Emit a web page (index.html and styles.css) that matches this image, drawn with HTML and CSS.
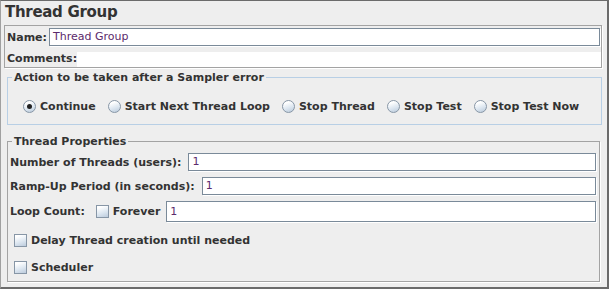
FILE: index.html
```html
<!DOCTYPE html>
<html>
<head>
<meta charset="utf-8">
<link rel="stylesheet" href="styles.css">
</head>
<body>
<div class="frame">
  <h1 class="title">Thread Group</h1>
  <div class="name-panel">
    <div class="name-row">
      <span class="lbl name-lbl">Name:</span>
      <div class="field">Thread Group</div>
    </div>
    <div class="comments-row">
      <span class="lbl">Comments:</span>
      <div class="area"></div>
    </div>
  </div>
  <fieldset class="group action">
    <legend>Action to be taken after a Sampler error</legend>
    <div class="radios">
      <label class="opt"><span class="radio on"></span>Continue</label>
      <label class="opt"><span class="radio"></span>Start Next Thread Loop</label>
      <label class="opt"><span class="radio"></span>Stop Thread</label>
      <label class="opt"><span class="radio"></span>Stop Test</label>
      <label class="opt"><span class="radio"></span>Stop Test Now</label>
    </div>
  </fieldset>
  <fieldset class="group props">
    <legend>Thread Properties</legend>
    <div class="prow">
      <span class="lbl">Number of Threads (users):</span>
      <div class="field">1</div>
    </div>
    <div class="prow">
      <span class="lbl">Ramp-Up Period (in seconds):</span>
      <div class="field">1</div>
    </div>
    <div class="prow loop">
      <span class="lbl loop-lbl">Loop Count:</span>
      <label class="opt forever"><span class="check"></span>Forever</label>
      <div class="field">1</div>
    </div>
    <label class="opt crow delay"><span class="check"></span>Delay Thread creation until needed</label>
    <label class="opt crow sched"><span class="check"></span>Scheduler</label>
  </fieldset>
</div>
</body>
</html>
```
FILE: styles.css
```css
* { box-sizing: border-box; }
html, body { margin: 0; padding: 0; }
body {
  width: 609px;
  height: 289px;
  overflow: hidden;
  background: #eeeeee;
  font-family: "DejaVu Sans", sans-serif;
  font-size: 11px;
  color: #333333;
}
.frame {
  width: 609px;
  height: 289px;
  display: flex;
  flex-direction: column;
  background: #eeeeee;
  border-top: 1px solid #6b6b6b;
  border-left: 1px solid #a0a0a0;
  border-right: 2px solid #6b6b6b;
  border-bottom: 2px solid #6b6b6b;
}
.title {
  margin: 0;
  padding: 2px 0 0 4px;
  height: 20px;
  font-size: 15px;
  line-height: 18px;
  font-weight: bold;
  letter-spacing: -0.3px;
  color: #333333;
}
.lbl { font-weight: bold; line-height: 13px; white-space: nowrap; }
.name-panel {
  margin: 4px 5px 0 3px;
  border: 1px solid #a3a3a3;
  box-shadow: 1px 1px 0 #ffffff;
  padding: 2px 0 0 2px;
  display: flex;
  flex-direction: column;
  gap: 6px;
}
.name-row {
  display: flex;
  align-items: center;
  height: 18px;
  padding-right: 1px;
}
.name-lbl { width: 42px; }
.field {
  flex: 1;
  height: 18px;
  background: #ffffff;
  border: 1px solid #7a8a99;
  box-shadow: 1px 1px 0 #ffffff;
  padding: 0 3px;
  line-height: 16px;
  color: #5c2a6c;
  white-space: nowrap;
}
.comments-row { display: flex; height: 15px; }
.area { flex: 1; background: #ffffff; }

.group {
  margin: 0;
  padding: 0;
  min-width: 0;
  border: 1px solid #a3a3a3;
}
.group legend {
  margin-left: 4px;
  padding: 0 2px;
  font-weight: bold;
  line-height: 13px;
}
.action {
  margin: 3px 5px 0 6px;
  border-color: #b8cfe5;
  padding: 14px 0 9px 0;
}
.radios {
  display: flex;
  align-items: center;
  gap: 12px;
  height: 17px;
  padding-left: 15px;
}
.opt {
  display: flex;
  align-items: center;
  font-weight: bold;
  line-height: 13px;
  white-space: nowrap;
}
.radio {
  width: 13px;
  height: 13px;
  margin-right: 4px;
  border-radius: 50%;
  border: 1px solid #8796a6;
  background: linear-gradient(160deg, #ffffff 20%, #dce6f0 60%, #b9c9da 100%);
  display: flex;
  align-items: center;
  justify-content: center;
  flex: none;
}
.radio.on::after {
  content: "";
  width: 5px;
  height: 5px;
  border-radius: 50%;
  background: #222222;
}
.check {
  width: 13px;
  height: 13px;
  margin-right: 4px;
  border: 1px solid #8796a6;
  background: linear-gradient(160deg, #ffffff 15%, #dce6f0 60%, #bccbdc 100%);
  flex: none;
}

.props {
  flex: 1;
  margin: 10px 7px 5px 6px;
  box-shadow: 1px 1px 0 #ffffff;
  padding: 5px 3px 0 2px;
}
.props legend { margin-left: 2px; }
.prow {
  display: flex;
  align-items: center;
  height: 18px;
  margin-bottom: 6px;
}
.prow .lbl { margin-right: 7px; }
.prow.loop { height: 21px; }
.prow .field { height: 100%; }
.prow.loop .field { line-height: 19px; }
.prow .loop-lbl { margin-right: 11px; }
.forever { margin-right: 6px; }
.crow {
  height: 17px;
  margin-left: 4px;
  width: max-content;
}
.delay { margin-top: 10px; }
.sched { margin-top: 10px; }
```
